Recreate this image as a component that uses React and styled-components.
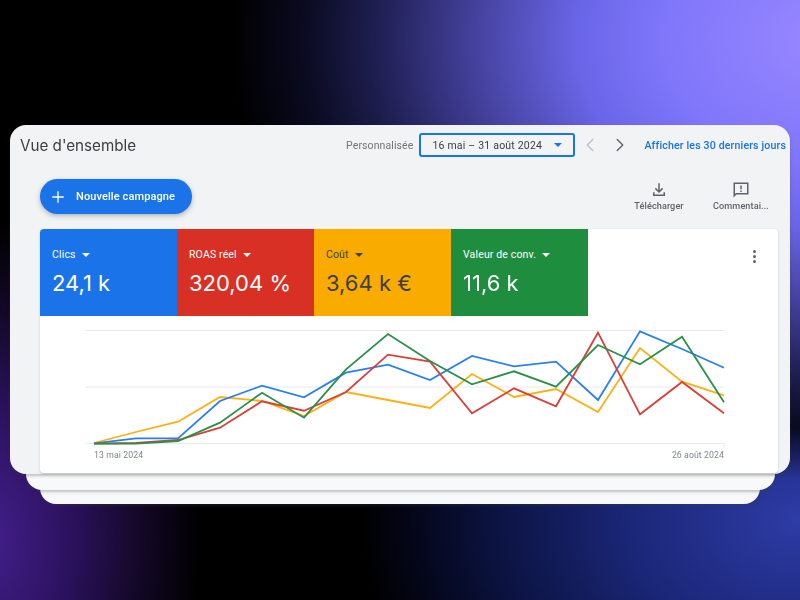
import React from "react";
import styled, { createGlobalStyle } from "styled-components";
import { ChevronLeft, ChevronRight, Plus } from "lucide-react";

const GlobalStyle = createGlobalStyle`
  html, body { margin: 0; padding: 0; height: 100%; }
  body {
    width: 800px;
    height: 600px;
    overflow: hidden;
    font-family: Roboto, "Liberation Sans", sans-serif;
    background:
      radial-gradient(ellipse 600px 440px at 830px 40px, #9a88ff 0%, #7f76fa 28%, #6a66e8 42%, #45429f 59%, #1e1e50 76%, #0a0a20 88%, rgba(0, 0, 0, 0) 100%),
      radial-gradient(ellipse 440px 320px at 800px 520px, #2e3ca6 0%, #1a2676 40%, #0c1444 68%, #050820 85%, rgba(0, 0, 0, 0) 100%),
      radial-gradient(ellipse 220px 320px at -20px 540px, #45208f 0%, #2c1260 40%, #140828 72%, rgba(0, 0, 0, 0) 100%),
      #000;
  }
`;

const metrics = [
  { label: "Clics", value: "24,1 k", bg: "#1a73e8", fg: "#fff" },
  { label: "ROAS réel", value: "320,04 %", bg: "#d93025", fg: "#fff" },
  { label: "Coût", value: "3,64 k €", bg: "#f9ab00", fg: "#3c4043" },
  { label: "Valeur de conv.", value: "11,6 k", bg: "#1e8e3e", fg: "#fff" },
];

const xs = [94, 136, 178, 220, 262, 304, 346, 388, 430, 472, 514, 556, 598, 640, 682, 724];

const series = [
  { color: "#fbb016", ys: [443, 432, 421.7, 397, 401, 416, 392, 400, 408, 374, 397, 389, 412, 348, 381.7, 395.3] },
  { color: "#2a7fee", ys: [443.3, 438.3, 438.3, 401, 385.7, 397.3, 372.7, 364.7, 380, 356, 366.3, 361.7, 400, 331.3, 349, 367.7] },
  { color: "#d6423a", ys: [443.6, 443, 440, 427.7, 401.3, 410.7, 392, 354.7, 361.7, 413.3, 388.3, 406.3, 332.7, 414.3, 382, 413.3] },
  { color: "#2a9048", ys: [443.6, 443.6, 441, 422.7, 392.7, 417.7, 369.3, 334, 361, 384.3, 371.3, 386.7, 345, 364.3, 336.7, 402.3] },
];

// chart svg starts at x=40, y=316 in the page
const toPoints = (ys) => xs.map((x, i) => `${x - 40},${(ys[i] - 316).toFixed(1)}`).join(" ");

const Caret = ({ color = "currentColor" }) => (
  <svg width="8" height="4" viewBox="0 0 10 5">
    <path d="M0 0h10L5 5z" fill={color} />
  </svg>
);

const DownloadIcon = () => (
  <svg width="18" height="18" viewBox="0 0 24 24" fill="#5f6368">
    <path d="M11 3h2v9.200l3.100-3.100 1.400 1.400L12 16l-5.500-5.500 1.400-1.400L11 12.200z" />
    <path d="M4 15h2v3h12v-3h2v5H4z" />
  </svg>
);

const FeedbackIcon = () => (
  <svg width="18" height="18" viewBox="0 0 24 24" fill="#5f6368">
    <path d="M2 2h20v16H6l-4 4zm2 2v13.200L5.200 16H20V4z" />
    <path d="M11 6h2v5h-2zM11 12.500h2v2h-2z" />
  </svg>
);

const App = () => (
  <>
    <GlobalStyle />
    <Stage>
      <MainCard>
        <Header>
          <Title>Vue d'ensemble</Title>
          <DateControls>
            <DateLabel>Personnalisée</DateLabel>
            <DateSelect>
              <span>16 mai – 31 août 2024</span>
              <Caret color="#1a73e8" />
            </DateSelect>
            <NavArrow $muted>
              <ChevronLeft size={22} strokeWidth={1.5} />
            </NavArrow>
            <NavArrow>
              <ChevronRight size={22} strokeWidth={1.5} />
            </NavArrow>
            <RangeLink>Afficher les 30 derniers jours</RangeLink>
          </DateControls>
        </Header>
        <Toolbar>
          <NewCampaign>
            <Plus size={18} strokeWidth={1.8} />
            Nouvelle campagne
          </NewCampaign>
          <ToolActions>
            <ToolAction>
              <DownloadIcon />
              <span>Télécharger</span>
            </ToolAction>
            <ToolAction>
              <FeedbackIcon />
              <span>Commentai...</span>
            </ToolAction>
          </ToolActions>
        </Toolbar>
        <ChartCard>
          <Metrics>
            {metrics.map((m) => (
              <Metric key={m.label} $bg={m.bg} $fg={m.fg}>
                <MetricLabel>
                  {m.label}
                  <Caret />
                </MetricLabel>
                <MetricValue>{m.value}</MetricValue>
              </Metric>
            ))}
            <MenuDots>
              <i />
              <i />
              <i />
            </MenuDots>
          </Metrics>
          <ChartBody>
            <svg width="738" height="133" viewBox="0 0 738 133" fill="none">
              {[14.5, 71, 127.5].map((y) => (
                <line key={y} x1="45" x2="684.500" y1={y} y2={y} stroke="#e8eaed" strokeWidth="1" />
              ))}
              <line x1="54" x2="54" y1="127.500" y2="132" stroke="#e8eaed" />
              <line x1="684" x2="684" y1="127.500" y2="132" stroke="#e8eaed" />
              {series.map((s) => (
                <polyline key={s.color} points={toPoints(s.ys)} stroke={s.color} strokeWidth="1.8" fill="none" />
              ))}
            </svg>
            <AxisLabels>
              <span>13 mai 2024</span>
              <span>26 août 2024</span>
            </AxisLabels>
          </ChartBody>
        </ChartCard>
      </MainCard>
      <BackCard $left={16} $right={15} $height={32} $z={2} />
      <BackCard $left={30} $right={30} $height={30} $z={1} />
    </Stage>
  </>
);

export default App;

const Stage = styled.div`
  display: flex;
  flex-direction: column;
  padding: 125px 10px 0;
  filter: blur(0.35px);
`;

const MainCard = styled.section`
  position: relative;
  z-index: 3;
  box-sizing: border-box;
  height: 349px;
  padding: 0 12px 0 10px;
  background: #f1f3f4;
  border-radius: 16px;
  box-shadow: 0 2px 3px rgba(60, 64, 67, 0.3);
`;

const BackCard = styled.div`
  position: relative;
  z-index: ${({ $z }) => $z};
  height: ${({ $height }) => $height}px;
  margin: -16px ${({ $right }) => $right}px 0 ${({ $left }) => $left}px;
  background: #f8f9fa;
  border-radius: 0 0 16px 16px;
  box-shadow: 0 2px 3px rgba(60, 64, 67, 0.3);
`;

const Header = styled.header`
  display: flex;
  align-items: center;
  justify-content: space-between;
  height: 40px;
`;

const Title = styled.h1`
  margin: 0;
  font-family: Inter, Roboto, sans-serif;
  font-size: 15.2px;
  font-weight: 400;
  color: #3c4043;
`;

const DateControls = styled.div`
  display: flex;
  align-items: center;
  margin-right: -8px;
`;

const DateLabel = styled.span`
  font-size: 10.5px;
  color: #70757a;
  letter-spacing: 0.1px;
  margin-right: 6px;
`;

const DateSelect = styled.div`
  box-sizing: border-box;
  display: flex;
  align-items: center;
  justify-content: space-between;
  width: 156px;
  height: 24px;
  padding: 0 11px;
  border: 2px solid #1a73e8;
  border-radius: 3px;
  font-size: 10.5px;
  letter-spacing: 0.2px;
  color: #3c4043;
`;

const NavArrow = styled.span`
  display: flex;
  width: 30px;
  justify-content: center;
  color: ${({ $muted }) => ($muted ? "#bdc1c6" : "#5f6368")};
`;

const RangeLink = styled.a`
  margin-left: 9px;
  font-size: 10.6px;
  font-weight: 500;
  letter-spacing: 0.15px;
  color: #1a73e8;
`;

const Toolbar = styled.div`
  box-sizing: border-box;
  display: flex;
  align-items: flex-start;
  justify-content: space-between;
  height: 64px;
  padding: 14px 0 0 20px;
`;

const NewCampaign = styled.button`
  display: flex;
  align-items: center;
  gap: 9px;
  height: 35px;
  width: 152px;
  padding: 0 0 0 9px;
  border: 0;
  border-radius: 18px;
  background: #1a73e8;
  color: #fff;
  font-family: inherit;
  font-size: 11px;
  font-weight: 500;
  letter-spacing: 0.1px;
  box-shadow: 0 2px 5px rgba(60, 64, 67, 0.35);
`;

const ToolActions = styled.div`
  display: flex;
  margin: 2px -4px 0 0;
`;

const ToolAction = styled.div`
  display: flex;
  flex-direction: column;
  align-items: center;
  gap: 2px;
  width: 82px;
  font-size: 9.1px;
  font-weight: 500;
  color: #5f6368;
  letter-spacing: 0.1px;
`;

const ChartCard = styled.div`
  margin-left: 20px;
  height: 244px;
  background: #fff;
  border-radius: 4px;
  overflow: hidden;
  box-shadow: 0 1px 2px rgba(60, 64, 67, 0.3);
`;

const Metrics = styled.div`
  display: flex;
  height: 87px;
`;

const Metric = styled.div`
  box-sizing: border-box;
  width: 137px;
  padding: 19px 12px 0;
  background: ${({ $bg }) => $bg};
  color: ${({ $fg }) => $fg};
`;

const MetricLabel = styled.div`
  display: flex;
  align-items: center;
  gap: 6px;
  font-size: 10.5px;
  letter-spacing: 0.15px;
  line-height: 14px;
`;

const MetricValue = styled.div`
  margin-top: 8px;
  font-family: Inter, Roboto, sans-serif;
  font-size: 22px;
  line-height: 26px;
`;

const MenuDots = styled.div`
  display: flex;
  flex-direction: column;
  gap: 2px;
  margin: 21px 0 0 auto;
  padding-right: 22px;
  i {
    width: 3px;
    height: 3px;
    border-radius: 50%;
    background: #5f6368;
  }
`;

const ChartBody = styled.div`
  svg {
    display: block;
  }
`;

const AxisLabels = styled.div`
  display: flex;
  justify-content: space-between;
  width: 630px;
  margin: 1px 0 0 54px;
  font-size: 8.7px;
  letter-spacing: 0.1px;
  color: #80868b;
`;
